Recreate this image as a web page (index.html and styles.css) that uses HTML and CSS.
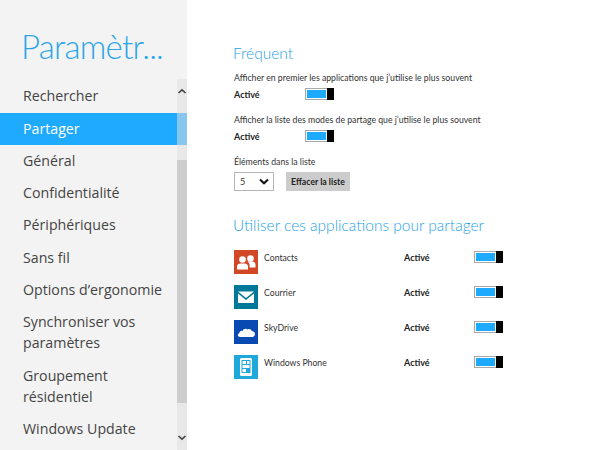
FILE: index.html
```html
<!DOCTYPE html>
<html lang="fr">
<head>
<meta charset="UTF-8">
<title>Paramètres</title>
<link rel="stylesheet" href="styles.css">
</head>
<body>

<aside class="charm">
  <h1 class="charmTitle">Paramètr...</h1>
  <nav class="navList">
    <div class="navItem">Rechercher</div>
    <div class="navItem selected">Partager</div>
    <div class="navItem">Général</div>
    <div class="navItem">Confidentialité</div>
    <div class="navItem">Périphériques</div>
    <div class="navItem">Sans fil</div>
    <div class="navItem">Options d’ergonomie</div>
    <div class="navItem">Synchroniser vos paramètres</div>
    <div class="navItem">Groupement résidentiel</div>
    <div class="navItem">Windows Update</div>
    <div class="scrollTrack">
      <svg class="arrowUp" width="10" height="7" viewBox="0 0 10 7"><path d="M1.500 5 5 1.800 8.500 5" fill="none" stroke="#444" stroke-width="1.600"/></svg>
      <div class="scrollThumb"></div>
      <svg class="arrowDown" width="10" height="7" viewBox="0 0 10 7"><path d="M1.500 2 5 5.200 8.500 2" fill="none" stroke="#444" stroke-width="1.600"/></svg>
    </div>
  </nav>
</aside>

<main class="content">
  <h2 class="sectionTitle">Fréquent</h2>

  <div class="setting">
    <div class="settingLabel">Afficher en premier les applications que j’utilise le plus souvent</div>
    <div class="settingRow">
      <span class="state">Activé</span>
      <span class="toggle"><span class="toggleFill"></span><span class="toggleKnob"></span></span>
    </div>
  </div>

  <div class="setting">
    <div class="settingLabel">Afficher la liste des modes de partage que j’utilise le plus souvent</div>
    <div class="settingRow">
      <span class="state">Activé</span>
      <span class="toggle"><span class="toggleFill"></span><span class="toggleKnob"></span></span>
    </div>
  </div>

  <div class="setting">
    <div class="settingLabel">Éléments dans la liste</div>
    <div class="listControls">
      <div class="combo">
        <span>5</span>
        <svg width="10" height="7" viewBox="0 0 10 7"><path d="M1 1.500 5 5.300 9 1.500" fill="none" stroke="#111" stroke-width="2"/></svg>
      </div>
      <div class="clearBtn">Effacer la liste</div>
    </div>
  </div>

  <h2 class="sectionTitle appsTitle">Utiliser ces applications pour partager</h2>

  <div class="appRow">
    <div class="appIcon contacts">
      <svg width="24" height="24" viewBox="0 0 24 24" fill="#fff">
        <circle cx="8.500" cy="9.500" r="3.300"/>
        <circle cx="16.500" cy="8.500" r="3.300"/>
        <path d="M3 19.500v-3c0-1.800 1.700-3 3.300-3h4.400c1.600 0 3.300 1.200 3.300 3v3z"/>
        <path d="M15.600 17.500h5.900v-3c0-1.800-1.500-3-3.200-3h-3.300c-.5 0-1 .1-1.400.3 1.700.8 2 2.600 2 4.200z"/>
      </svg>
    </div>
    <div class="appName">Contacts</div>
    <span class="state">Activé</span>
    <span class="toggle"><span class="toggleFill"></span><span class="toggleKnob"></span></span>
  </div>

  <div class="appRow">
    <div class="appIcon mail">
      <svg width="24" height="24" viewBox="0 0 24 24" fill="#fff">
        <path d="M4 6.500h16l-8 6.500z"/>
        <path d="M4 8.500 12 15l8-6.500V18H4z"/>
      </svg>
    </div>
    <div class="appName">Courrier</div>
    <span class="state">Activé</span>
    <span class="toggle"><span class="toggleFill"></span><span class="toggleKnob"></span></span>
  </div>

  <div class="appRow">
    <div class="appIcon skydrive">
      <svg width="24" height="24" viewBox="0 0 24 24" fill="#fff">
        <path d="M6 17c-2.300 0-3-2.900-.8-3.700.3-1.900 1.800-2.800 3.300-2.300.9-2 3.200-2.800 5.200-1.600 1.400-.8 3.500-.3 4.100 1.700 2.400.2 3.500 1.800 3.100 3.700-.2 1.300-1.300 2.200-2.700 2.200z"/>
      </svg>
    </div>
    <div class="appName">SkyDrive</div>
    <span class="state">Activé</span>
    <span class="toggle"><span class="toggleFill"></span><span class="toggleKnob"></span></span>
  </div>

  <div class="appRow">
    <div class="appIcon phone">
      <svg width="24" height="24" viewBox="0 0 24 24">
        <rect x="6" y="3" width="12" height="18" rx="1.500" fill="#fff"/>
        <rect x="7.500" y="5" width="9" height="13" fill="#1fa8dc"/>
        <rect x="8.500" y="6" width="3.500" height="3" fill="#fff"/>
        <rect x="13" y="6" width="2.500" height="3" fill="#fff"/>
        <rect x="8.500" y="10" width="7" height="3" fill="#fff"/>
        <rect x="8.500" y="14" width="3.500" height="3" fill="#fff"/>
      </svg>
    </div>
    <div class="appName">Windows Phone</div>
    <span class="state">Activé</span>
    <span class="toggle"><span class="toggleFill"></span><span class="toggleKnob"></span></span>
  </div>
</main>

</body>
</html>
```

FILE: styles.css
```css
body {
    margin: 0;
    height: 450px;
    overflow: hidden;
    display: flex;
    background: #fff;
    color: #333;
    font-family: Lato, "Open Sans", sans-serif;
}

.charm {
    width: 187px;
    flex: none;
    background: #f3f3f3;
}

.charmTitle {
    margin: 0;
    padding: 27px 0 0 21px;
    height: 52px;
    font-size: 33px;
    line-height: 38px;
    font-weight: 300;
    letter-spacing: -0.75px;
    color: #2aa6e8;
    white-space: nowrap;
}

.navList {
    position: relative;
    height: 371px;
    padding-top: 1.700px;
    box-sizing: border-box;
}

.navItem {
    padding: 4.600px 14px 6.700px 23px;
    font-family: "Open Sans", sans-serif;
    font-size: 14.200px;
    line-height: 21px;
    color: #444;
}

.navItem.selected {
    background: #1eaaff;
    color: #fff;
}

.scrollTrack {
    position: absolute;
    top: 0;
    right: 0;
    bottom: 0;
    width: 10px;
    background: rgba(222, 222, 222, 0.55);
}

.arrowUp, .arrowDown {
    position: absolute;
    left: 0;
}

.arrowUp {
    top: 9px;
}

.arrowDown {
    bottom: 9px;
}

.scrollThumb {
    position: absolute;
    top: 81px;
    left: 0;
    right: 0;
    height: 243px;
    background: #cdcdcd;
}

.content {
    flex: 1;
    padding: 43px 0 0 46px;
}

.sectionTitle {
    margin: 0 0 8px;
    font-size: 15.500px;
    line-height: 20px;
    font-weight: 300;
    color: #1f9fe6;
}

.appsTitle {
    margin: 24px 0 15px;
}

.setting {
    margin-bottom: 11px;
    padding-left: 1px;
}

.settingLabel {
    font-size: 8.700px;
    line-height: 14px;
    color: #333;
    white-space: nowrap;
}

.settingRow {
    display: flex;
    align-items: center;
    height: 16px;
    margin-top: 1px;
}

.settingRow .state {
    width: 71px;
}

.state {
    font-size: 9px;
    font-weight: 700;
    color: #222;
}

.toggle {
    display: flex;
    width: 29px;
    height: 12px;
    box-sizing: border-box;
    border: 1px solid #a8a8a8;
    border-right: 0;
    background: #fff;
}

.toggleFill {
    flex: 1;
    margin: 1px;
    background: #1eaaff;
}

.toggleKnob {
    width: 7px;
    margin: -1px 0;
    background: #000;
}

.listControls {
    display: flex;
    gap: 12px;
    margin-top: 3px;
}

.combo {
    display: flex;
    align-items: center;
    justify-content: space-between;
    width: 40px;
    height: 19px;
    box-sizing: border-box;
    padding: 0 4px 0 5px;
    border: 1px solid #b5b5b5;
    font-size: 9px;
}

.clearBtn {
    width: 64px;
    height: 19px;
    background: #cccccc;
    font-size: 8.700px;
    font-weight: 700;
    line-height: 19px;
    text-align: center;
    color: #222;
}

.appRow {
    display: flex;
    align-items: flex-start;
    height: 35px;
    padding-left: 1px;
}

.appIcon {
    width: 24px;
    height: 24px;
    flex: none;
}

.appIcon svg {
    display: block;
}

.contacts { background: #d24726; }
.mail { background: #00789a; }
.skydrive { background: #094ab2; }
.phone { background: #1fa8dc; }

.appName {
    width: 140px;
    margin-left: 6px;
    padding-top: 1px;
    font-size: 8.700px;
    line-height: 14px;
}

.appRow .state {
    width: 70px;
    line-height: 14px;
    padding-top: 1px;
}

.appRow .toggle {
    margin-top: 1px;
}
```
